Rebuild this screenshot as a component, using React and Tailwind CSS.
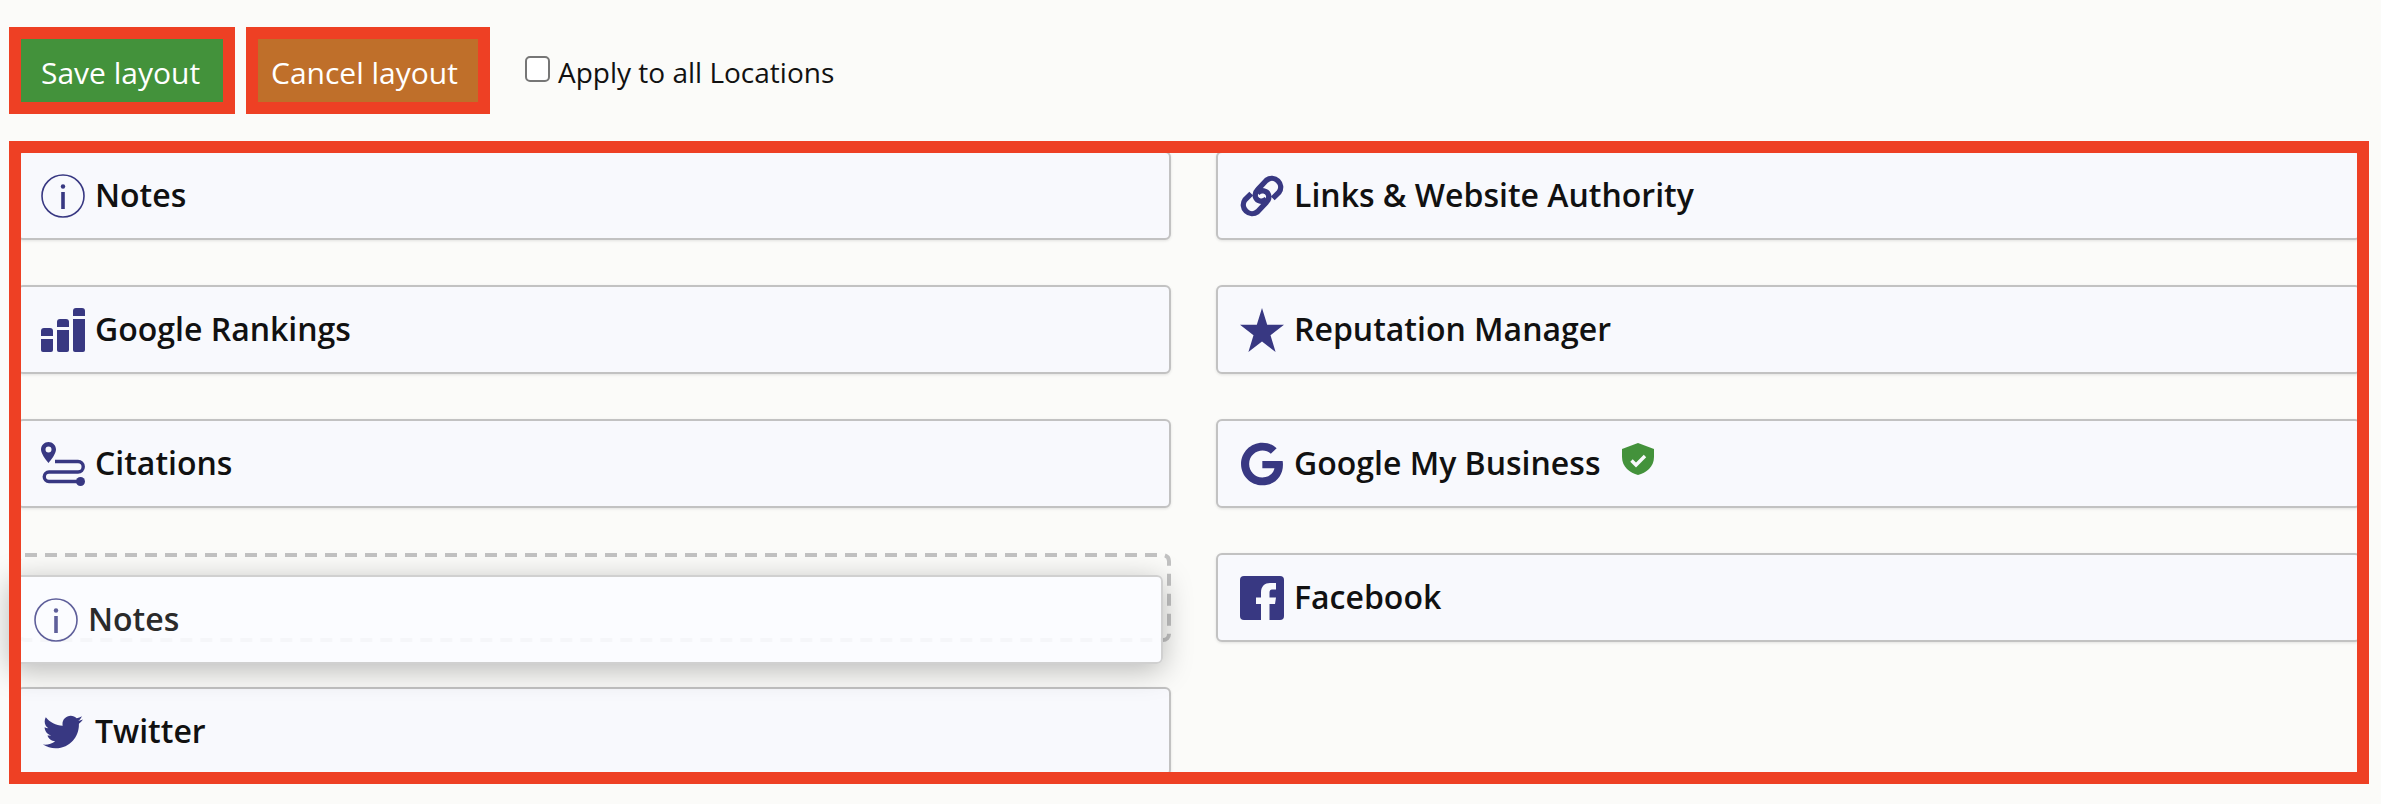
import React from "react";
import { FaTwitter, FaGoogle } from "react-icons/fa";

const InfoIcon = () => (
  <svg viewBox="0 0 44 44" className="w-[44px] h-[44px]">
    <circle cx="22" cy="22" r="21" fill="none" stroke="#383882" strokeWidth="1.6" />
    <circle cx="22" cy="12.5" r="2.2" fill="#383882" />
    <rect x="20.2" y="18" width="3.6" height="17" fill="#383882" />
  </svg>
);

const BarsIcon = () => (
  <svg viewBox="0 0 44 44" className="w-[44px] h-[44px]" fill="#383882">
    <path d="M0 23a3 3 0 0 1 3-3h6a3 3 0 0 1 3 3v5H0z" />
    <path d="M0 31h12v11a2 2 0 0 1-2 2H2a2 2 0 0 1-2-2z" />
    <path d="M16 14a3 3 0 0 1 3-3h6a3 3 0 0 1 3 3v5H16z" />
    <path d="M16 22h12v20a2 2 0 0 1-2 2H18a2 2 0 0 1-2-2z" />
    <path d="M32 3a3 3 0 0 1 3-3h6a3 3 0 0 1 3 3v5H32z" />
    <path d="M32 11h12v31a2 2 0 0 1-2 2H34a2 2 0 0 1-2-2z" />
  </svg>
);

const RouteIcon = () => (
  <svg viewBox="0 0 44 44" className="w-[44px] h-[44px]" fill="none">
    <path
      fillRule="evenodd"
      d="M7.5 0C3.4 0 0 3.3 0 7.4c0 4 4.5 9.8 7.5 13.6 3-3.8 7.5-9.6 7.5-13.6C15 3.3 11.6 0 7.5 0zm0 10.5a3 3 0 1 1 0-6 3 3 0 0 1 0 6z"
      fill="#383882"
    />
    <path
      d="M14 19.5H37a5 5 0 0 1 0 10.5H8a4.5 4.5 0 0 0 0 9.5H39"
      stroke="#383882"
      strokeWidth="3.4"
    />
    <circle cx="39.5" cy="39.5" r="4.5" fill="#383882" />
  </svg>
);

const LinkIcon = () => (
  <svg viewBox="0 0 42.3 42.3" className="w-[44px] h-[44px]" fill="none" stroke="#383882" strokeWidth="5.2">
    <path d="M25.5 24C22 27.5 16.5 26.5 15 22.5C14 19.5 15 17 17 15L25.5 6A8.4 8.4 0 0 1 37.5 17.5L31.5 23.5" />
    <path
      d="M25.5 24C22 27.5 16.5 26.5 15 22.5C14 19.5 15 17 17 15L25.5 6A8.4 8.4 0 0 1 37.5 17.5L31.5 23.5"
      transform="rotate(180 21.15 21.15)"
    />
  </svg>
);

const StarIcon = () => (
  <svg viewBox="0 0 44 44" className="w-[44px] h-[44px]">
    <polygon
      points="22,0 27.2,16.8 44,16.8 30.5,27.2 35.6,44 22,33.6 8.4,44 13.5,27.2 0,16.8 16.8,16.8"
      fill="#383882"
    />
  </svg>
);

const FacebookIcon = () => (
  <svg viewBox="0 0 44 44" className="w-[44px] h-[44px]">
    <rect width="44" height="44" rx="4" fill="#383882" />
    <path
      d="M21 44V28H16V21.5H21V16.5C21 10 25 7 30 7H36V13.5H32C30.5 13.5 29.5 14.5 29.5 16.5V21.5H36L35 28H29.5V44Z"
      fill="#f8f9fd"
    />
  </svg>
);

const ShieldIcon = () => (
  <svg viewBox="0 0 32 32" className="w-[32px] h-[32px] ml-[22px] -mt-[9px]">
    <path d="M16 0L32 6V14C32 24 24 30 16 32C8 30 0 24 0 14V6Z" fill="#43923b" />
    <path d="M9.5 17.5L14 22L23 13" fill="none" stroke="#f8f9fd" strokeWidth="3.4" />
  </svg>
);

const Card = ({ icon, label, children }) => (
  <div className="h-[89px] flex items-center pl-[22px] bg-[#f8f9fd] border-2 border-[#c2c2c2] rounded-[6px] shadow-[0_1px_3px_rgba(0,0,0,0.1)]">
    <span className="w-[44px] h-[44px] flex items-center justify-center shrink-0 text-[#383882]">
      {icon}
    </span>
    <span className="ml-[10px] -mt-[2px] text-[32px] leading-[44px] font-semibold text-[#111111]">
      {label}
    </span>
    {children}
  </div>
);

export default function App() {
  return (
    <div className="h-[804px] overflow-hidden bg-[#fbfbf9] font-['Open_Sans',sans-serif]">
      <div className="flex items-center pt-[27px] pl-[9px]">
        <div className="border-[12px] border-[#ee4024]">
          <button className="w-[202px] h-[63px] pl-[20px] pt-[4px] text-left bg-[#43923b] text-white text-[30px]">
            Save layout
          </button>
        </div>
        <div className="ml-[11px] border-[12px] border-[#ee4024]">
          <button className="w-[220px] h-[63px] pl-[13px] pt-[4px] text-left bg-[#bf6f2a] text-white text-[30px]">
            Cancel layout
          </button>
        </div>
        <label className="ml-[35px] flex items-center gap-[8px] text-[28px] text-[#111111]">
          <input
            type="checkbox"
            className="appearance-none w-[25px] h-[26px] bg-white border-2 border-[#767676] rounded-[5px] -mt-[3px]"
          />
          <span className="pt-[2px]">Apply to all Locations</span>
        </label>
      </div>

      <div className="relative h-[643px] mt-[27px] ml-[9px] mr-[12px] pt-[10px] px-[8px] flex gap-[45px]">
        <div className="w-[1154px] shrink-0 flex flex-col gap-[45px]">
          <Card icon={<InfoIcon />} label="Notes" />
          <Card icon={<BarsIcon />} label="Google Rankings" />
          <Card icon={<RouteIcon />} label="Citations" />
          <div className="relative h-[89px]">
            <svg viewBox="0 0 1154 89" className="w-full h-full">
              <rect
                x="2"
                y="2"
                width="1150"
                height="85"
                rx="6"
                fill="none"
                stroke="#c2c2c2"
                strokeWidth="4"
                strokeDasharray="12 8"
              />
            </svg>
            <div className="absolute top-[22px] -left-[7px] w-[1153px] h-[89px] flex items-center pl-[22px] bg-[#fbfcff]/90 border-2 border-[#d0d0d0] rounded-[6px] shadow-[0_6px_30px_rgba(0,0,0,0.27)]">
              <span className="opacity-80">
                <InfoIcon />
              </span>
              <span className="ml-[10px] -mt-[2px] text-[32px] leading-[44px] font-semibold text-[#2b2b2b]">
                Notes
              </span>
            </div>
          </div>
          <Card icon={<FaTwitter size={40} />} label="Twitter" />
        </div>
        <div className="flex-1 flex flex-col gap-[45px]">
          <Card icon={<LinkIcon />} label="Links & Website Authority" />
          <Card icon={<StarIcon />} label="Reputation Manager" />
          <Card icon={<FaGoogle size={44} />} label="Google My Business">
            <ShieldIcon />
          </Card>
          <Card icon={<FacebookIcon />} label="Facebook" />
        </div>
        {/* red annotation frame sits on top of the cards */}
        <div className="absolute inset-0 border-[12px] border-[#ee4024] pointer-events-none" />
      </div>
    </div>
  );
}
